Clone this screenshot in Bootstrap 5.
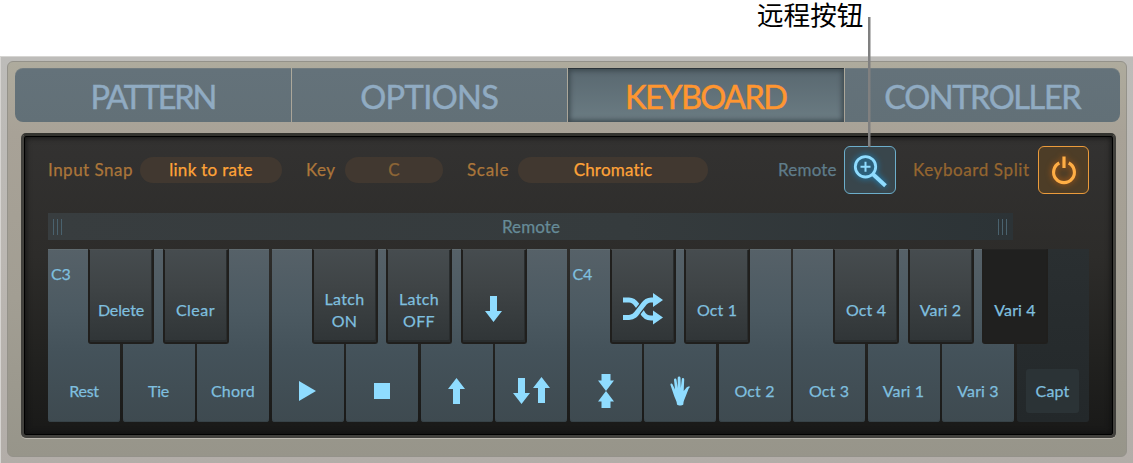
<!DOCTYPE html>
<html lang="en">
<head>
    <meta charset="UTF-8">
    <meta name="viewport" content="width=device-width, initial-scale=1.0">
    <title>Arpeggiator Keyboard</title>
    <link href="https://cdn.jsdelivr.net/npm/bootstrap@5.3.0/dist/css/bootstrap.min.css" rel="stylesheet">
    <style>
        body {
            background-color: #fff;
            font-family: Lato, "Noto Sans CJK SC", sans-serif;
            font-size: 17px;
            line-height: 1;
            padding-top: 56px;
            overflow: hidden;
            font-variant-ligatures: none;
            white-space: nowrap;
        }
        .chassis {
            height: 407px;
            padding: 4px 6px 6px 7px;
            background: linear-gradient(#bdbcb9, #bbb7b2 50%, #b2ada8);
            border-top: 1px solid #d6d5d2;
            border-left: 1px solid #d6d4d1;
        }
        .faceplate {
            height: 396px;
            margin-left: -1px;
            padding: 6px 6px 0 7px;
            border: 1px solid #94928a;
            border-radius: 6px;
            background: linear-gradient(#aeab9d, #a8a297 18%, #a29e93 60%, #97958a);
        }
        .tabs-bar {
            height: 54px;
            gap: 1px;
        }
        .tabs-bar .tab-item {
            flex: 1 1 0;
            background: linear-gradient(#64727a, #627077);
            border: 0;
            border-top: 1px solid #717c80;
            color: #90abc2;
            font-size: 32.5px;
            border-radius: 0;
            padding: 3px 0 0;
            line-height: 1;
            -webkit-text-stroke: .5px currentColor;
        }
        .tabs-bar .tab-item:first-child { border-radius: 8px 0 0 8px; }
        .tabs-bar .tab-item:last-child { border-radius: 0 8px 8px 0; }
        .tabs-bar .tab-item.active {
            color: #ff9630;
            background: linear-gradient(#596870, #6b7c83);
            box-shadow: inset 0 0 5px 2px #3d494f;
            border-top-color: #2b3439;
        }
        .screen {
            height: 305px;
            margin: 11px 4px 0 6px;
            padding: 9px 21px 0 24px;
            background: linear-gradient(#333231, #2d2c2a 40%, #21211f 75%, #191918);
            border: 3px solid #42413d;
            border-top-color: #33332f;
            border-radius: 5px;
            box-shadow: 0 1px 0 #bbb7ae, inset 0 0 0 1px #000, inset 0 0 6px 1px #0d0d0d;
        }
        .param-row, .remote-bar, .keys { -webkit-text-stroke: .25px currentColor; }
        .param-row { height: 50px; color: #ab763a; padding-bottom: 1px; }
        .param-row > span:not(.pill) { padding-bottom: 1px; }
        .pill {
            height: 26px;
            border-radius: 13px;
            background-color: #413830;
            color: #ffa338;
        }
        .pill.dimmed { color: #8e6636; }
        .toggle {
            height: 48px;
            border: 1.500px solid #6caecb;
            border-radius: 6px;
            background-color: #39464c;
            padding: 0;
            margin-top: 1px;
        }
        .toggle.power {
            border-color: #eb9b3b;
            background-color: #4d3d27;
        }
        .toggle svg { display: block; overflow: visible; margin: 0 auto; }
        .glow-blue { filter: drop-shadow(0 0 3px #168fd0); }
        .glow-orange { filter: drop-shadow(0 0 3px #b85d12); }
        .remote-bar {
            width: 965px;
            height: 27px;
            margin-top: 18px;
            padding: 0 4px 0 5px;
            background: linear-gradient(90deg, #383d3f, #353b3d 60%, #2c3336);
            color: #668b98;
        }
        .grip {
            width: 11px;
            height: 16px;
            background: repeating-linear-gradient(90deg, #4a626e 0 1.500px, transparent 1.500px 4px);
        }
        .keys {
            gap: 2.5px;
            height: 173px;
            margin-top: 9px;
            width: 1040.5px;
            color: #7fbfdf;
            font-size: 16px;
            letter-spacing: .15px;
        }
        .key-white {
            flex: 1 1 0;
            min-width: 0;
            position: relative;
            background: linear-gradient(#566168, #4c5a62 35%, #44525a 60%, #3e4a50);
            border-radius: 0 0 3px 3px;
            box-shadow: inset 0 1px 0 #606b70, inset 0 -1px 0 #374247;
        }
        .key-white .key-label { height: 62px; }
        .key-black {
            position: absolute;
            z-index: 2;
            left: 40px;
            top: 0;
            width: 66px;
            height: 95px;
            padding-top: 28px;
            background: linear-gradient(#464c4f, #3f4446 40%, #303537);
            border: 2.5px solid #201f1d;
            border-top: 1px solid #4c5051;
            border-radius: 0 0 3px 3px;
            box-shadow: inset -1px -2px 0 #292d2e;
            line-height: 22.5px;
        }
        .key-black .glyph { margin-top: -3px; }
        .key-black.off { background: #20201f; box-shadow: none; border-top-color: #242423; }
        .key-white.off { background: linear-gradient(#2a2f31, #23282a); box-shadow: none; }
        .octave { position: absolute; left: 3px; top: 17px; letter-spacing: -.3px; }
        .capt-btn {
            width: 53px;
            height: 44px;
            border-radius: 3px;
            background-color: #2b3336;
        }
        .glyph { fill: #8fdcff; display: block; }
        .callout-text {
            position: absolute;
            left: 757px;
            top: 0;
            font: 26.6px/28px "Noto Sans CJK SC", sans-serif;
            color: #000;
        }
        .callout-line {
            position: absolute;
            z-index: 3;
            left: 867.5px;
            top: 17px;
            width: 3px;
            height: 130px;
            background: linear-gradient(90deg, #808080 2px, #80808080 2px);
        }
    </style>
</head>
<body>
    <svg width="0" height="0" class="position-absolute">
        <symbol id="arrow-down" viewBox="0 0 17 26"><path d="M5 0h7v15h5L8.500 26 0 15h5z"/></symbol>
        <symbol id="arrow-up" viewBox="0 0 17 26"><path d="M5 26h7V11h5L8.500 0 0 11h5z"/></symbol>
    </svg>

    <div class="callout-text">远程按钮</div>
    <div class="callout-line"></div>

    <div class="chassis">
        <div class="faceplate">
            <div class="tabs-bar d-flex">
                <button class="btn tab-item" style="letter-spacing: -2.200px">PATTERN</button>
                <button class="btn tab-item" style="letter-spacing: -.6px">OPTIONS</button>
                <button class="btn tab-item active" style="letter-spacing: -1.600px">KEYBOARD</button>
                <button class="btn tab-item" style="letter-spacing: -1.400px">CONTROLLER</button>
            </div>

            <div class="screen">
                <div class="param-row d-flex align-items-center">
                    <span style="width: 92px; letter-spacing: .5px">Input Snap</span>
                    <span class="pill d-flex align-items-center justify-content-center" style="width: 142px; letter-spacing: .3px">link to rate</span>
                    <span style="width: 63px; padding-left: 24px; letter-spacing: .4px">Key</span>
                    <span class="pill dimmed d-flex align-items-center justify-content-center" style="width: 98px">C</span>
                    <span style="width: 75px; padding-left: 24px; letter-spacing: .7px">Scale</span>
                    <span class="pill d-flex align-items-center justify-content-center" style="width: 190px; letter-spacing: .2px">Chromatic</span>
                    <span style="width: 135.5px; padding-left: 70px; color: #5f7c8a; letter-spacing: .2px">Remote</span>
                    <button class="btn toggle" style="width: 52.5px">
                        <svg width="50" height="45" class="glow-blue" fill="none" stroke="#8fdcff">
                            <circle cx="20.500" cy="18.800" r="10.200" stroke-width="2.800"/>
                            <path d="M15.500 18.800h10M20.500 13.800v10" stroke-width="2"/>
                            <path d="M28 26.300L40.500 37.800" stroke-width="4"/>
                        </svg>
                    </button>
                    <span style="width: 142px; padding-left: 17px; letter-spacing: .6px; color: #95662f">Keyboard Split</span>
                    <button class="btn toggle power" style="width: 51px">
                        <svg width="48" height="45" class="glow-orange" fill="none" stroke="#ffae45" stroke-width="3.200">
                            <path d="M19.300 15a10.400 10.400 0 1 0 9.400 0M24 8.500v11.500"/>
                        </svg>
                    </button>
                </div>

                <div class="remote-bar d-flex align-items-center justify-content-between">
                    <span class="grip"></span>
                    <span style="letter-spacing: .1px">Remote</span>
                    <span class="grip"></span>
                </div>

                <div class="keys d-flex">
                    <div class="key-white d-flex flex-column justify-content-end">
                        <span class="octave">C3</span>
                        <div class="key-label d-flex align-items-center justify-content-center" style="letter-spacing: -.3px">Rest</div>
                        <div class="key-black d-flex align-items-center justify-content-center" style="letter-spacing: -.1px">Delete</div>
                    </div>
                    <div class="key-white d-flex flex-column justify-content-end">
                        <div class="key-label d-flex align-items-center justify-content-center" style="letter-spacing: -.3px">Tie</div>
                        <div class="key-black d-flex align-items-center justify-content-center" style="letter-spacing: .5px">Clear</div>
                    </div>
                    <div class="key-white d-flex flex-column justify-content-end">
                        <div class="key-label d-flex align-items-center justify-content-center">Chord</div>
                    </div>
                    <div class="key-white d-flex flex-column justify-content-end">
                        <div class="key-label d-flex align-items-center justify-content-center">
                            <svg class="glyph" width="17" height="20"><path d="M0 0l17 10L0 20z"/></svg>
                        </div>
                        <div class="key-black d-flex align-items-center justify-content-center text-center" style="letter-spacing: .3px">Latch<br>ON</div>
                    </div>
                    <div class="key-white d-flex flex-column justify-content-end">
                        <div class="key-label d-flex align-items-center justify-content-center">
                            <svg class="glyph" width="16" height="16"><path d="M0 0h16v16H0z"/></svg>
                        </div>
                        <div class="key-black d-flex align-items-center justify-content-center text-center" style="letter-spacing: .3px">Latch<br>OFF</div>
                    </div>
                    <div class="key-white d-flex flex-column justify-content-end">
                        <div class="key-label d-flex align-items-center justify-content-center">
                            <svg class="glyph" width="17" height="26"><use href="#arrow-up"/></svg>
                        </div>
                        <div class="key-black d-flex align-items-center justify-content-center">
                            <svg class="glyph" width="17" height="26"><use href="#arrow-down"/></svg>
                        </div>
                    </div>
                    <div class="key-white d-flex flex-column justify-content-end">
                        <div class="key-label d-flex align-items-center justify-content-center">
                            <svg class="glyph" width="37" height="28">
                                <use href="#arrow-down" x="0" y="1" width="17" height="26"/>
                                <use href="#arrow-up" x="20" y="0" width="17" height="26"/>
                            </svg>
                        </div>
                    </div>
                    <div class="key-white d-flex flex-column justify-content-end">
                        <span class="octave">C4</span>
                        <div class="key-label d-flex align-items-center justify-content-center">
                            <svg class="glyph" width="16" height="34"><path d="M3.500 0h9v6.500H16L8 17l8 10.500h-3.500V34h-9v-6.500H0L8 17 0 6.500h3.500z"/></svg>
                        </div>
                        <div class="key-black d-flex align-items-center justify-content-center">
                            <svg class="glyph" width="40" height="32">
                                <g fill="none" stroke="#8fdcff" stroke-width="5">
                                    <path d="M0 7h6c4 0 6 2 8 5l5 7c2 4 5 6 9 6h3"/>
                                    <path d="M6 24.500c5 0 7-3 9-6l5-6.500c2-3 4-5 8-5" stroke="#383d3f" stroke-width="7.500"/>
                                    <path d="M0 24.500h6c5 0 7-3 9-6l5-6.500c2-3 4-5 8-5h3"/>
                                </g>
                                <path d="M30 0l10 7-10 7zM30 17.500l10 7-10 7z"/>
                            </svg>
                        </div>
                    </div>
                    <div class="key-white d-flex flex-column justify-content-end">
                        <div class="key-label d-flex align-items-center justify-content-center">
                            <svg class="glyph" width="20" height="30"><path d="M7 28.500C7 25 4.500 22 3.500 18L.5 9C.1 7.200 1.900 6.800 2.500 8.300L5 13.500 4 4C3.900 2 6.200 1.800 6.500 3.800L7.700 12V2C7.800 0 10.400 0 10.500 2l.3 10 1-8.700c.2-2 2.500-1.700 2.400.3L13.700 15l2.500-3c1-1.300 2.200-1.800 3.600-1.400.3.600-.8 1.400-1.300 2.400L15.800 20c-1 3-2.500 5-2.500 8.500-1.500 1.400-4.800 1.400-6.300 0z"/></svg>
                        </div>
                        <div class="key-black d-flex align-items-center justify-content-center">Oct 1</div>
                    </div>
                    <div class="key-white d-flex flex-column justify-content-end">
                        <div class="key-label d-flex align-items-center justify-content-center">Oct 2</div>
                    </div>
                    <div class="key-white d-flex flex-column justify-content-end">
                        <div class="key-label d-flex align-items-center justify-content-center">Oct 3</div>
                        <div class="key-black d-flex align-items-center justify-content-center">Oct 4</div>
                    </div>
                    <div class="key-white d-flex flex-column justify-content-end">
                        <div class="key-label d-flex align-items-center justify-content-center">Vari 1</div>
                        <div class="key-black d-flex align-items-center justify-content-center">Vari 2</div>
                    </div>
                    <div class="key-white d-flex flex-column justify-content-end">
                        <div class="key-label d-flex align-items-center justify-content-center">Vari 3</div>
                        <div class="key-black off d-flex align-items-center justify-content-center">Vari 4</div>
                    </div>
                    <div class="key-white off d-flex flex-column justify-content-end">
                        <div class="key-label d-flex align-items-center justify-content-center">
                            <span class="capt-btn d-flex align-items-center justify-content-center">Capt</span>
                        </div>
                    </div>
                </div>
            </div>
        </div>
    </div>
    <script src="https://cdn.jsdelivr.net/npm/bootstrap@5.3.0/dist/js/bootstrap.bundle.min.js"></script>
</body>
</html>
